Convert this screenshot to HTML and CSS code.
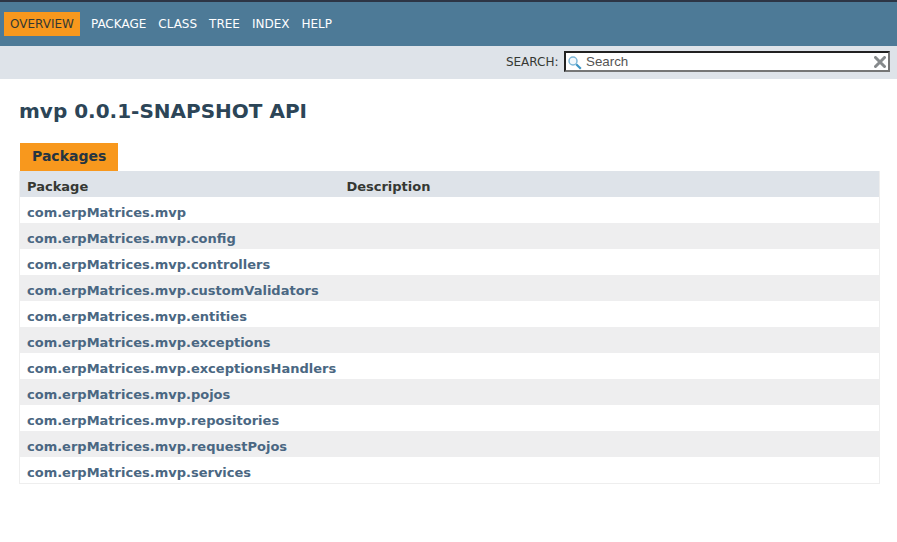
FILE: index.html
```html
<!DOCTYPE html>
<html lang="en">
<head>
<meta charset="utf-8">
<title>Overview (mvp 0.0.1-SNAPSHOT API)</title>
<link rel="stylesheet" href="styles.css">
</head>
<body>
<header>
<nav class="top-nav">
<ul class="nav-list">
<li class="active">Overview</li>
<li><a href="#">Package</a></li>
<li><a href="#">Class</a></li>
<li><a href="#">Tree</a></li>
<li><a href="#">Index</a></li>
<li><a href="#">Help</a></li>
</ul>
</nav>
<div class="sub-nav">
<label for="search">SEARCH:</label>
<div class="search-box">
<svg class="glass" width="14" height="14" viewBox="0 0 14 14"><path d="M8.2 8.2l4.6 4.6" stroke="#3b94c4" stroke-width="2.2"/><circle cx="5" cy="5" r="4" fill="#f2f8fc" stroke="#7db7d8" stroke-width="1.5"/></svg>
<input id="search" type="text" placeholder="Search">
<svg class="reset" width="12" height="12" viewBox="0 0 12 12"><path d="M1.5 1.5l9 9M10.5 1.5l-9 9" stroke="#868a8c" stroke-width="3" stroke-linecap="round"/></svg>
</div>
</div>
</header>
<main>
<h1>mvp 0.0.1-SNAPSHOT API</h1>
<div class="caption"><span>Packages</span></div>
<div class="summary">
<div class="head">Package</div><div class="head">Description</div>
<div class="even"><a href="#">com.erpMatrices.mvp</a></div><div class="even"></div>
<div class="odd"><a href="#">com.erpMatrices.mvp.config</a></div><div class="odd"></div>
<div class="even"><a href="#">com.erpMatrices.mvp.controllers</a></div><div class="even"></div>
<div class="odd"><a href="#">com.erpMatrices.mvp.customValidators</a></div><div class="odd"></div>
<div class="even"><a href="#">com.erpMatrices.mvp.entities</a></div><div class="even"></div>
<div class="odd"><a href="#">com.erpMatrices.mvp.exceptions</a></div><div class="odd"></div>
<div class="even"><a href="#">com.erpMatrices.mvp.exceptionsHandlers</a></div><div class="even"></div>
<div class="odd"><a href="#">com.erpMatrices.mvp.pojos</a></div><div class="odd"></div>
<div class="even"><a href="#">com.erpMatrices.mvp.repositories</a></div><div class="even"></div>
<div class="odd"><a href="#">com.erpMatrices.mvp.requestPojos</a></div><div class="odd"></div>
<div class="even"><a href="#">com.erpMatrices.mvp.services</a></div><div class="even"></div>
</div>
</main>
</body>
</html>
```
FILE: styles.css
```css
* { box-sizing: border-box; }
body {
  margin: 0;
  background: #fff;
  color: #353833;
  font-family: "DejaVu Sans", Arial, sans-serif;
  font-size: 14px;
}
a { color: #4a6782; text-decoration: none; }
.top-nav {
  height: 46px;
  padding: 10px 4px 0;
  border-top: 2px solid #2d3545;
  background: #4d7a97;
  font-size: 12px;
}
.nav-list {
  display: flex;
  gap: 12px;
  margin: 0;
  padding: 0;
  list-style: none;
  line-height: 14px;
  text-transform: uppercase;
}
.nav-list li { padding: 5px 0; color: #fff; }
.nav-list a { color: #fff; }
.nav-list .active { margin-right: -1px; padding: 5px 6px; background: #f8981d; color: #353833; }
.sub-nav {
  display: flex;
  justify-content: flex-end;
  align-items: flex-start;
  height: 33px;
  padding: 5px 7px 0 0;
  background: #dee3e9;
  font-size: 12px;
}
.sub-nav label { padding: 4px 5.5px 0 0; line-height: 14px; }
.search-box { position: relative; width: 326px; height: 21px; }
.search-box input {
  display: block;
  width: 100%;
  height: 21px;
  margin: 0;
  padding: 0 20px;
  border: 2px inset #767676;
  background: #fff;
  font: 13.333px "Liberation Sans", Arial, sans-serif;
}
.search-box input::placeholder { color: #545454; }
.glass { position: absolute; left: 4px; top: 5px; }
.reset { position: absolute; right: 4px; top: 5px; }
main { padding: 20px 17px 0 19px; }
h1 { margin: 0; color: #2c4557; font-size: 20px; line-height: 24px; }
.caption { display: flex; margin-top: 20px; padding-left: 1px; }
.caption span {
  height: 28px;
  padding: 5px 12px 0;
  background: #f8981d;
  color: #253441;
  font-weight: bold;
  line-height: 16px;
}
.summary {
  display: grid;
  grid-template-columns: 319.4px 1fr;
  grid-auto-rows: 26px;
  border: 1px solid #eee;
  border-top: 0;
  font-size: 13px;
  font-weight: bold;
}
.summary > div { padding: 8px 0 0 7px; line-height: 15px; }
.head { background: #dee3e9; }
.odd { background: #eeeeef; }
.even { background: #fff; }
```
